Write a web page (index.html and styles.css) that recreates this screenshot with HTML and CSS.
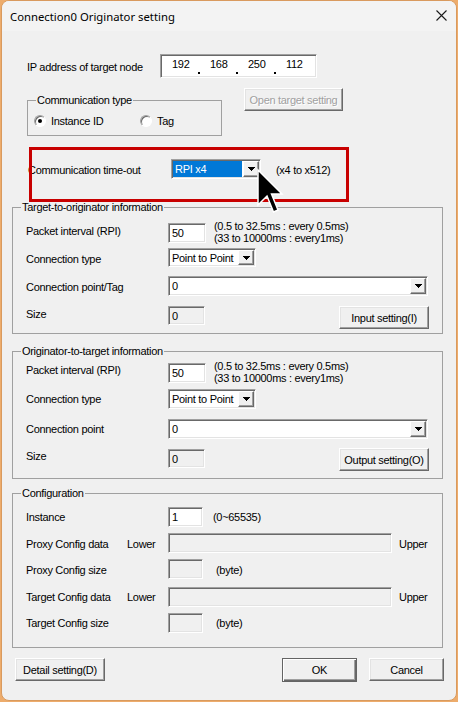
FILE: index.html
```html
<!DOCTYPE html>
<html lang="en">
<head>
<meta charset="utf-8">
<title>Connection0 Originator setting</title>
<link rel="stylesheet" href="styles.css">
</head>
<body>
<div class="window">
  <div class="titlebar">
    <span class="title">Connection0 Originator setting</span>
    <svg class="close" width="11" height="11" viewBox="0 0 11 11"><path d="M0.5 0.5L10.5 10.5M10.5 0.5L0.5 10.5" stroke="#1a1a1a" stroke-width="1.1" fill="none"/></svg>
  </div>
  <div class="content">
    <div class="row ip-row">
      <span class="lbl ip-lbl">IP address of target node</span>
      <div class="field ipbox">
        <span class="oct">192</span><span class="ipdot"></span>
        <span class="oct">168</span><span class="ipdot"></span>
        <span class="oct">250</span><span class="ipdot"></span>
        <span class="oct">112</span>
      </div>
    </div>

    <div class="comm-row">
      <fieldset class="group comm-group">
        <legend>Communication type</legend>
        <div class="radios">
          <span class="radio r-inst"><span class="rb checked"></span>Instance ID</span>
          <span class="radio"><span class="rb"></span>Tag</span>
        </div>
      </fieldset>
      <button class="btn disabled open-btn">Open target setting</button>
    </div>

    <div class="row timeout-row">
      <span class="lbl timeout-lbl">Communication time-out</span>
      <div class="field combo w90 h20">
        <span class="combo-text selected">RPI x4</span>
        <span class="drop"><svg width="7" height="4" viewBox="0 0 7 4"><path d="M0 0h7v1H0zM1 1h5v1H1zM2 2h3v1H2zM3 3h1v1H3z"/></svg></span>
      </div>
      <span class="lbl hint-inline">(x4 to x512)</span>
    </div>

    <fieldset class="group info t2o">
      <legend>Target-to-originator information</legend>
      <div class="row h20">
        <span class="lbl col up2">Packet interval (RPI)</span>
        <div class="field input w38 h20">50</div>
        <div class="hint"><div>(0.5 to 32.5ms : every 0.5ms)</div><div>(33 to 10000ms : every1ms)</div></div>
      </div>
      <div class="row t2o-r2">
        <span class="lbl col dn1">Connection type</span>
        <div class="field combo w88 h19">
          <span class="combo-text">Point to Point</span>
          <span class="drop"><svg width="7" height="4" viewBox="0 0 7 4"><path d="M0 0h7v1H0zM1 1h5v1H1zM2 2h3v1H2zM3 3h1v1H3z"/></svg></span>
        </div>
      </div>
      <div class="row t2o-r3">
        <span class="lbl col dn1">Connection point/Tag</span>
        <div class="field combo w260 h20">
          <span class="combo-text">0</span>
          <span class="drop"><svg width="7" height="4" viewBox="0 0 7 4"><path d="M0 0h7v1H0zM1 1h5v1H1zM2 2h3v1H2zM3 3h1v1H3z"/></svg></span>
        </div>
      </div>
      <div class="row sizerow t2o-r4">
        <span class="lbl col">Size</span>
        <div class="field input disabledf w37 h19">0</div>
        <button class="btn setting-btn">Input setting(I)</button>
      </div>
    </fieldset>

    <fieldset class="group info o2t">
      <legend>Originator-to-target information</legend>
      <div class="row h20">
        <span class="lbl col up3">Packet interval (RPI)</span>
        <div class="field input w38 h20">50</div>
        <div class="hint"><div>(0.5 to 32.5ms : every 0.5ms)</div><div>(33 to 10000ms : every1ms)</div></div>
      </div>
      <div class="row o2t-r2">
        <span class="lbl col">Connection type</span>
        <div class="field combo w88 h20">
          <span class="combo-text">Point to Point</span>
          <span class="drop"><svg width="7" height="4" viewBox="0 0 7 4"><path d="M0 0h7v1H0zM1 1h5v1H1zM2 2h3v1H2zM3 3h1v1H3z"/></svg></span>
        </div>
      </div>
      <div class="row o2t-r3">
        <span class="lbl col">Connection point</span>
        <div class="field combo w260 h20">
          <span class="combo-text">0</span>
          <span class="drop"><svg width="7" height="4" viewBox="0 0 7 4"><path d="M0 0h7v1H0zM1 1h5v1H1zM2 2h3v1H2zM3 3h1v1H3z"/></svg></span>
        </div>
      </div>
      <div class="row sizerow o2t-r4">
        <span class="lbl col">Size</span>
        <div class="field input disabledf w37 h19 sz-o2t">0</div>
        <button class="btn setting-btn h24">Output setting(O)</button>
      </div>
    </fieldset>

    <fieldset class="group info config">
      <legend>Configuration</legend>
      <div class="row h20">
        <span class="lbl col">Instance</span>
        <div class="field input w35 h20">1</div>
        <span class="lbl note-range">(0~65535)</span>
      </div>
      <div class="row cfg-r">
        <span class="lbl cfg-name dn1">Proxy Config data</span>
        <span class="lbl cfg-lower dn1">Lower</span>
        <div class="field input disabledf w224 h20"></div>
        <span class="lbl cfg-upper dn1">Upper</span>
      </div>
      <div class="row cfg-r">
        <span class="lbl col dn1">Proxy Config size</span>
        <div class="field input disabledf w35 h20"></div>
        <span class="lbl note-byte dn1">(byte)</span>
      </div>
      <div class="row cfg-r cfg-r4">
        <span class="lbl cfg-name">Target Config data</span>
        <span class="lbl cfg-lower">Lower</span>
        <div class="field input disabledf w224 h20"></div>
        <span class="lbl cfg-upper">Upper</span>
      </div>
      <div class="row cfg-r">
        <span class="lbl col">Target Config size</span>
        <div class="field input disabledf w35 h20"></div>
        <span class="lbl note-byte">(byte)</span>
      </div>
    </fieldset>

    <div class="footer">
      <button class="btn detail-btn">Detail setting(D)</button>
      <button class="btn default ok-btn">OK</button>
      <button class="btn cancel-btn">Cancel</button>
    </div>
  </div>

  <div class="annot"></div>
  <svg class="cursor" width="30" height="48" viewBox="0 0 30 48"><path d="M2 2 L2 37 L11 28 L17.5 44 L22 42 L15.5 26 L26 26 Z" fill="#000" stroke="#fff" stroke-width="1.5" stroke-linejoin="miter"/></svg>
</div>
</body>
</html>
```
FILE: styles.css
```css
* { box-sizing: border-box; }
html, body { margin: 0; padding: 0; }
body {
  background: #edac6c;
  font-family: "Liberation Sans", Arial, sans-serif;
  font-size: 11px;
  letter-spacing: -0.3px;
  color: #000;
  width: 458px;
  height: 702px;
  overflow: hidden;
}
.window {
  position: relative;
  margin-left: 1px;
  width: 456px;
  height: 701px;
  border: 1px solid #d99a5e;
  border-radius: 8px;
  background: #f0f0f0;
  overflow: hidden;
}
.titlebar {
  height: 30px;
  background: #f3f3f3;
  display: flex;
  align-items: center;
  padding: 0 9px 0 8px;
}
.title {
  flex: 1;
  font-family: "Noto Sans", "Open Sans", sans-serif;
  font-size: 11.3px;
  letter-spacing: 0;
  color: #000;
}
.close { display: block; margin-top: -1px; }

.content { display: flex; flex-direction: column; }
.row { display: flex; align-items: center; }
.lbl { line-height: 12px; white-space: nowrap; }
.up2 { margin-top: -4px; }
.up3 { margin-top: -6px; }
.dn1 { margin-top: 2px; }

/* sunken field */
.field {
  border: 1px solid;
  border-color: #a0a0a0 #fff #fff #a0a0a0;
  box-shadow: inset 1px 1px 0 #696969, inset -1px -1px 0 #e3e3e3;
  background: #fff;
}
.input {
  display: flex;
  align-items: center;
  padding-left: 3px;
  line-height: 12px;
}
.disabledf { background: #f0f0f0; }
.w35 { width: 35px; }
.w37 { width: 37px; }
.w38 { width: 38px; }
.w88 { width: 88px; }
.w90 { width: 90px; }
.w224 { width: 224px; }
.w260 { width: 260px; }
.h19 { height: 19px; }
.h20 { height: 20px; }
.h24 { height: 24px; }

/* IP box */
.ip-row { margin: 23px 0 0 25px; height: 24px; }
.ip-lbl { width: 133px; margin-top: 2px; }
.ipbox {
  width: 157px;
  height: 24px;
  display: flex;
  align-items: flex-start;
  padding: 3px 0 0 11px;
  line-height: 12px;
}
.oct { width: 18px; }
.ipdot {
  width: 2px;
  height: 2px;
  background: #000;
  margin: 14px 10px 0 8px;
}

/* group boxes */
.group {
  margin: 0;
  padding: 0;
  min-width: 0;
  border: 1px solid #a0a0a0;
}
.group legend {
  padding: 0 1px;
  line-height: 12px;
}
.comm-row {
  display: flex;
  align-items: flex-start;
  margin: 10px 0 0 25px;
}
.comm-group {
  margin-top: 6px;
  width: 195px;
  height: 42px;
  padding: 8px 0 0 6px;
}
.comm-group legend { margin-left: 2px; }
.radios { display: flex; align-items: center; height: 13px; }
.radio { display: flex; align-items: center; gap: 5px; line-height: 12px; }
.r-inst { width: 106px; }
.rb {
  position: relative;
  width: 12px;
  height: 12px;
  border-radius: 50%;
  border: 1px solid;
  border-color: #a0a0a0 #fff #fff #a0a0a0;
  box-shadow: inset 1px 1px 0 #696969;
  background: #fff;
}
.rb.checked::after {
  content: "";
  position: absolute;
  left: 3px;
  top: 3px;
  width: 4px;
  height: 4px;
  border-radius: 50%;
  background: #000;
}

/* buttons */
.btn {
  font: inherit;
  letter-spacing: inherit;
  line-height: 12px;
  color: #000;
  background: #f0f0f0;
  margin: 0;
  padding: 0;
  border: 1px solid;
  border-color: #fff #696969 #696969 #fff;
  box-shadow: inset -1px -1px 0 #a0a0a0, inset 1px 1px 0 #e3e3e3;
  display: flex;
  align-items: center;
  justify-content: center;
}
.btn.disabled { color: #a0a0a0; text-shadow: 1px 1px 0 #fff; }
.btn.default {
  border-color: #646464;
  box-shadow: inset 1px 1px 0 #fff, inset -1px -1px 0 #696969, inset -2px -2px 0 #a0a0a0;
}
.open-btn { margin-left: 22px; width: 99px; height: 23px; }

/* combo */
.combo { display: flex; padding: 1px; }
.combo-text {
  flex: 1;
  display: flex;
  align-items: center;
  padding-left: 2px;
  line-height: 12px;
}
.combo-text.selected {
  background: #0078d7;
  color: #fff;
  margin-right: 1px;
}
.drop {
  width: 16px;
  background: #f0f0f0;
  border: 1px solid;
  border-color: #fff #696969 #696969 #fff;
  box-shadow: inset -1px -1px 0 #a0a0a0;
  display: flex;
  align-items: center;
  justify-content: center;
}
.drop svg { display: block; }

.timeout-row { margin: 23px 0 0 26px; height: 20px; }
.timeout-lbl { width: 143px; margin-top: 2px; }
.hint-inline { margin: 2px 0 0 15px; }

/* info groups */
.info {
  margin: 0 13px 0 10px;
  width: 431px;
  padding: 0 13px;
}
.info legend { margin-left: -5px; }
.col { width: 142px; }
.hint {
  align-self: flex-start;
  margin: -3px 0 0 8px;
  line-height: 12px;
  white-space: nowrap;
}
.t2o { margin-top: 22px; height: 133px; padding-top: 10px; }
.t2o-r2 { margin-top: 5px; }
.t2o-r3 { margin-top: 9px; }
.t2o-r4 { margin-top: 10px; }
.sizerow { align-items: flex-start; }
.sizerow .lbl { margin-top: 2px; }
.setting-btn { margin-left: auto; width: 90px; height: 23px; }

.o2t { margin-top: 11px; height: 134px; padding-top: 6px; }
.o2t-r2 { margin-top: 6px; }
.o2t-r3 { margin-top: 10px; }
.o2t-r4 { margin-top: 9px; }
.sz-o2t { margin-top: 1px; }

.config { margin-top: 8px; height: 161px; padding-top: 8px; }
.cfg-r { margin-top: 6px; }
.cfg-r4 { margin-top: 8px; }
.cfg-name { width: 101px; }
.cfg-lower { width: 41px; }
.cfg-upper { margin-left: 7px; }
.note-range { margin-left: 10px; }
.note-byte { margin-left: 13px; }

/* footer */
.footer {
  display: flex;
  margin-top: 10px;
  padding: 0 12px 0 13px;
}
.detail-btn { width: 90px; height: 23px; margin-right: auto; }
.ok-btn { width: 75px; height: 24px; }
.cancel-btn { width: 75px; height: 23px; margin-left: 12px; }

/* overlays */
.annot {
  position: absolute;
  left: 27px;
  top: 146px;
  width: 320px;
  height: 55px;
  border: 3px solid #c80000;
  pointer-events: none;
}
.cursor {
  position: absolute;
  left: 254px;
  top: 167px;
  pointer-events: none;
}
```
